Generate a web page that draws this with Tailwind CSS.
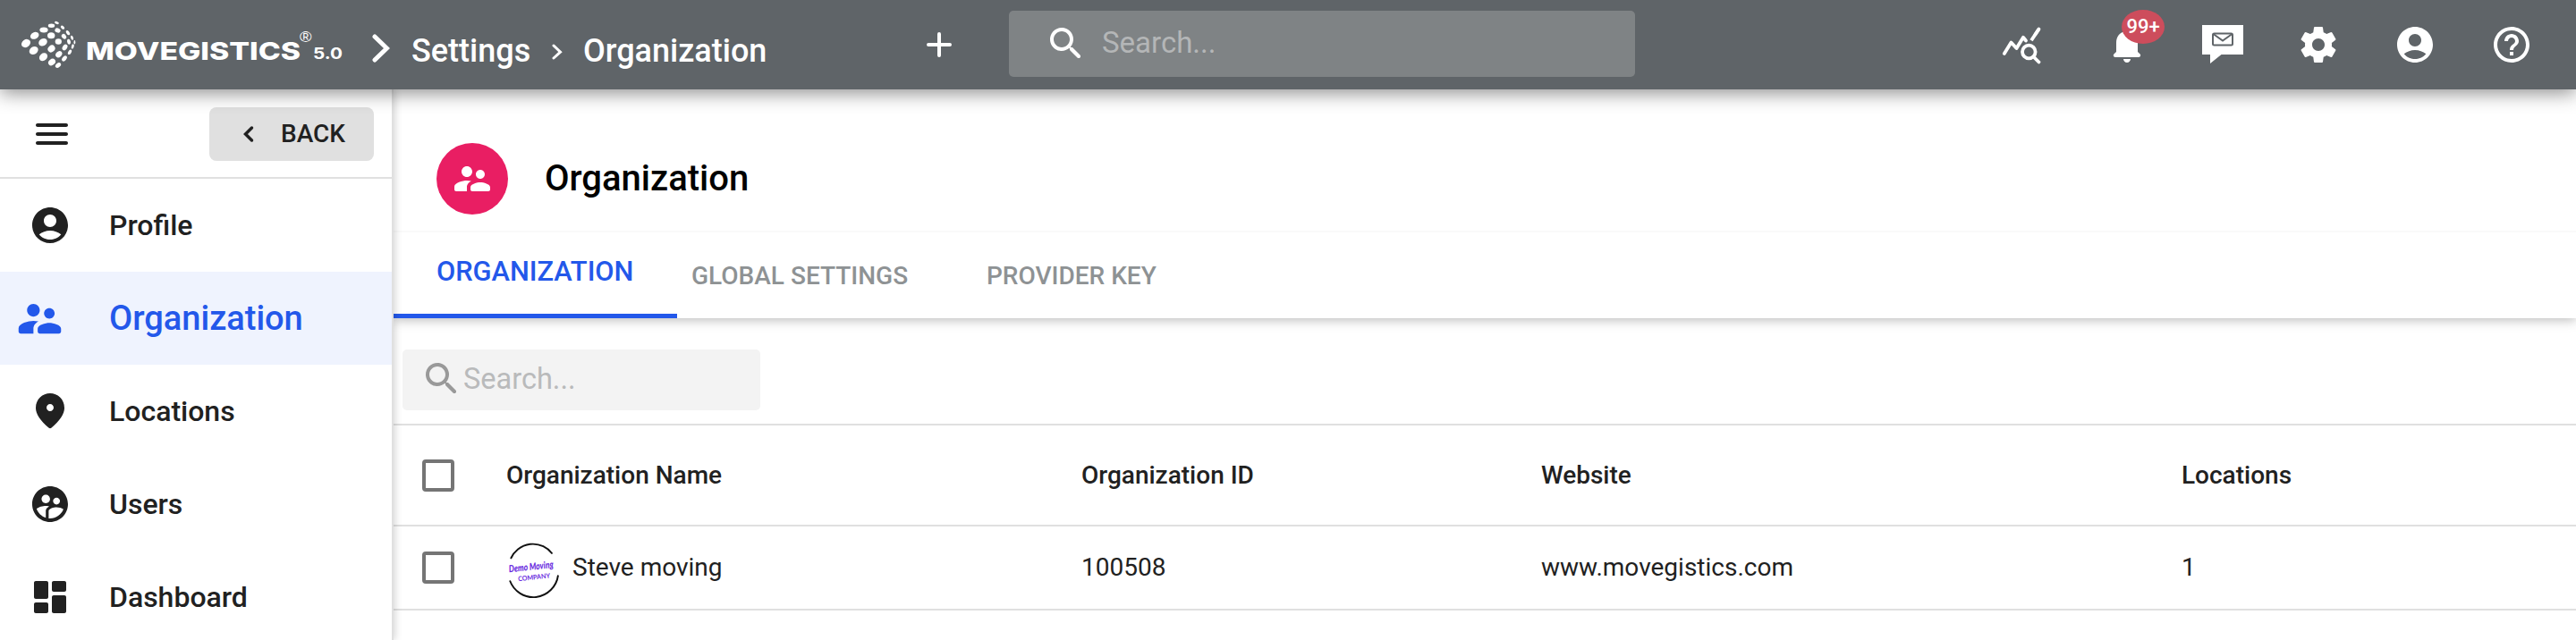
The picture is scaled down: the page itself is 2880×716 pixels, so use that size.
<!DOCTYPE html>
<html lang="en">
 <head>
  <meta charset="utf-8"/>
  <meta content="width=device-width, initial-scale=1" name="viewport"/>
  <title>Movegistics - Organization</title>
  <script src="https://cdn.jsdelivr.net/npm/@tailwindcss/browser@4"></script>
 </head>
 <body class="bg-white font-[Roboto,sans-serif] text-[#212121] h-[716px] overflow-hidden flex flex-col">
  <!-- Top bar -->
  <header class="relative z-20 h-[100px] shrink-0 bg-[#5f6468] text-white flex items-center shadow-[0_4px_20px_rgba(0,0,0,0.45)]">
   <svg class="ml-6 w-[60px] h-[52px] overflow-visible" viewBox="24 24 60 52" fill="currentColor">
    <ellipse cx="29" cy="48.500" rx="5.400" ry="4.200" transform="rotate(-35 29 48.500)"/>
    <ellipse cx="38.700" cy="39.800" rx="5" ry="3.700" transform="rotate(-25 38.700 39.800)"/>
    <ellipse cx="49" cy="33.500" rx="4.600" ry="3"/>
    <ellipse cx="57.500" cy="28.700" rx="3.700" ry="2.200"/>
    <ellipse cx="63.500" cy="25.500" rx="2.500" ry="1.400" transform="rotate(20 63.500 25.500)"/>
    <ellipse cx="37.700" cy="56.500" rx="5.300" ry="4.200" transform="rotate(-35 37.700 56.500)"/>
    <ellipse cx="48" cy="47.200" rx="5" ry="4" transform="rotate(-30 48 47.200)"/>
    <ellipse cx="57.200" cy="39.700" rx="4.200" ry="3.500"/>
    <ellipse cx="64.500" cy="34" rx="3.200" ry="2.500" transform="rotate(20 64.500 34)"/>
    <ellipse cx="70" cy="30.700" rx="2.500" ry="1.600" transform="rotate(40 70 30.700)"/>
    <ellipse cx="48.500" cy="63.700" rx="5" ry="4" transform="rotate(-40 48.500 63.700)"/>
    <ellipse cx="57.500" cy="54.500" rx="4.300" ry="3.600" transform="rotate(-40 57.500 54.500)"/>
    <ellipse cx="65.300" cy="46.500" rx="3.600" ry="3.300"/>
    <ellipse cx="71.500" cy="40.800" rx="3.100" ry="2.300" transform="rotate(50 71.500 40.800)"/>
    <ellipse cx="76" cy="36.700" rx="2.900" ry="1.700" transform="rotate(55 76 36.700)"/>
    <ellipse cx="58" cy="69.500" rx="4.300" ry="3.400" transform="rotate(-40 58 69.500)"/>
    <ellipse cx="65.800" cy="60.700" rx="4" ry="3.100" transform="rotate(-45 65.800 60.700)"/>
    <ellipse cx="72.500" cy="53" rx="3.600" ry="2.500" transform="rotate(-55 72.500 53)"/>
    <ellipse cx="77" cy="46.700" rx="3" ry="1.900" transform="rotate(80 77 46.700)"/>
    <ellipse cx="80.500" cy="42.200" rx="2.600" ry="1.400" transform="rotate(70 80.500 42.200)"/>
    <ellipse cx="65" cy="73" rx="3.500" ry="2.400" transform="rotate(-40 65 73)"/>
    <ellipse cx="72" cy="65.500" rx="3.500" ry="2.200" transform="rotate(-50 72 65.500)"/>
    <ellipse cx="78" cy="58.300" rx="3" ry="1.700" transform="rotate(-60 78 58.300)"/>
    <ellipse cx="81.300" cy="52" rx="2.700" ry="1.400" transform="rotate(-75 81.300 52)"/>
    <ellipse cx="83.400" cy="47.200" rx="2.200" ry="0.900" transform="rotate(90 83.400 47.200)"/>
   </svg>
   <svg class="ml-3 w-[292px] h-[100px]" viewBox="0 0 292 100" fill="currentColor">
    <text x="0" y="67" font-family="Inter, sans-serif" font-weight="800" font-size="27.500" textLength="240" lengthAdjust="spacingAndGlyphs">MOVEGISTICS</text>
    <text x="239" y="47" font-family="Liberation Sans, sans-serif" font-size="17" textLength="13.500" lengthAdjust="spacingAndGlyphs">®</text>
    <text x="254" y="66" font-family="Inter, sans-serif" font-weight="700" font-size="17.500" textLength="33" lengthAdjust="spacingAndGlyphs">5.0</text>
   </svg>
   <svg class="ml-7 mt-2 w-5 h-8" viewBox="0 0 20 32" fill="none" stroke="currentColor" stroke-width="5" stroke-linecap="round" stroke-linejoin="miter"><path d="M3 3l13.500 13L3 29"/></svg>
   <nav class="flex items-center pt-[13px] ml-6 text-[36px] font-medium w-[566px]">
    <span class="w-[157px]">Settings</span>
    <svg class="w-3 h-[18px] mt-[3px] mr-[23px]" viewBox="0 0 12 18" fill="none" stroke="currentColor" stroke-width="3" stroke-linecap="round"><path d="M2 2l7.500 7.200L2 16"/></svg>
    <span>Organization</span>
   </nav>
   <svg class="ml-2.5 w-7 h-7" viewBox="0 0 28 28" stroke="currentColor" stroke-width="4" stroke-linecap="round"><path d="M14 2v24M2 14h24"/></svg>
   <div class="ml-16 w-[700px] h-[74px] mb-0.5 rounded-[5px] bg-[#7f8385] flex items-center">
    <svg class="ml-10 w-12 h-12" viewBox="0 0 24 24" fill="currentColor"><path d="M15.500 14h-.79l-.28-.27c1.200-1.400 1.820-3.310 1.480-5.340-.47-2.780-2.790-5-5.590-5.340-4.230-.52-7.780 3.040-7.270 7.270.34 2.800 2.560 5.120 5.340 5.590 2.030.34 3.940-.28 5.340-1.480l.27.28v.79l4.250 4.250c.41.41 1.080.41 1.490 0 .41-.41.41-1.080 0-1.490L15.500 14zm-6 0C7.010 14 5 11.990 5 9.500S7.010 5 9.500 5 14 7.010 14 9.500 11.990 14 9.500 14z"/></svg>
    <span class="ml-4 mb-0.5 text-[33px] text-[#b4b6b7]">Search...</span>
   </div>
   <div class="ml-auto mr-12 flex items-center gap-[60px]">
    <svg class="w-12 h-12 mr-2.5" viewBox="0 0 48 48" fill="none" stroke="currentColor" stroke-width="3.800" stroke-linecap="round" stroke-linejoin="round"><path d="M4.800 34l7.700-12.500 6 6.500L26 15.800l3 3.700"/><path d="M43.500 6.500L35 19.300" stroke-linecap="butt"/><path d="M43.500 6.500l-4 6"/><circle cx="32.300" cy="32" r="7.300"/><path d="M38.500 38.500l5 5"/></svg>
    <div class="relative -mr-0.5">
     <svg class="w-12 h-12" viewBox="0 0 24 24" fill="currentColor"><path d="M12 22c1.100 0 2-.9 2-2h-4c0 1.100.89 2 2 2zm6-6v-5c0-3.070-1.640-5.640-4.500-6.320V4c0-.83-.67-1.500-1.500-1.500s-1.500.67-1.500 1.500v.68C7.630 5.360 6 7.920 6 11v5l-1.290 1.290c-.63.63-.19 1.710.7 1.710h13.170c.89 0 1.340-1.080.71-1.710L18 16z"/></svg>
     <span class="absolute left-[18px] -top-[15px] w-12 h-[38px] rounded-[50%] bg-[#cd4d5c] text-[22px] font-medium leading-[37px] text-center">99+</span>
    </div>
    <svg class="w-12 h-12" viewBox="0 0 48 48"><path fill="currentColor" d="M2 2h46v33H23.500L11 45V35H2z"/><g fill="none" stroke="#5f6468" stroke-width="2"><rect x="14" y="11.500" width="22" height="13" rx="1.500"/><path d="M14.500 12L25 19.500 35.500 12"/></g></svg>
    <svg class="w-12 h-12" viewBox="0 0 24 24" fill="currentColor"><path d="M19.430 12.980c.04-.32.070-.64.070-.98s-.03-.66-.07-.98l2.110-1.650c.19-.15.240-.42.120-.64l-2-3.460c-.12-.22-.39-.3-.61-.22l-2.490 1c-.52-.4-1.080-.73-1.690-.98l-.38-2.650C14.460 2.180 14.250 2 14 2h-4c-.25 0-.46.180-.49.420l-.38 2.650c-.61.25-1.170.59-1.690.98l-2.490-1c-.23-.09-.49 0-.61.220l-2 3.460c-.13.220-.07.490.12.640l2.110 1.650c-.04.320-.07.650-.07.980s.030.660.070.980l-2.110 1.650c-.19.150-.24.420-.12.640l2 3.460c.12.220.39.300.61.220l2.490-1c.52.400 1.080.730 1.690.980l.38 2.650c.030.240.240.420.490.420h4c.25 0 .46-.18.490-.42l.38-2.650c.61-.25 1.170-.59 1.690-.98l2.490 1c.23.090.49 0 .61-.22l2-3.460c.12-.22.070-.49-.12-.64l-2.110-1.650zM12 15.500c-1.930 0-3.500-1.570-3.500-3.500s1.570-3.500 3.500-3.500 3.500 1.570 3.500 3.500-1.570 3.500-3.500 3.500z"/></svg>
    <svg class="w-12 h-12" viewBox="0 0 24 24" fill="currentColor"><path d="M12 2C6.480 2 2 6.480 2 12s4.480 10 10 10 10-4.480 10-10S17.520 2 12 2zm0 4c1.930 0 3.500 1.570 3.500 3.500S13.930 13 12 13s-3.500-1.570-3.500-3.500S10.070 6 12 6zm0 14c-2.030 0-4.430-.82-6.140-2.880C7.550 15.800 9.680 15 12 15s4.450.8 6.140 2.120C16.430 19.180 14.030 20 12 20z"/></svg>
    <svg class="w-12 h-12" viewBox="0 0 24 24" fill="currentColor"><path d="M11 18h2v-2h-2v2zm1-16C6.480 2 2 6.480 2 12s4.480 10 10 10 10-4.480 10-10S17.520 2 12 2zm0 18c-4.410 0-8-3.590-8-8s3.590-8 8-8 8 3.590 8 8-3.590 8-8 8zm0-14c-2.210 0-4 1.790-4 4h2c0-1.100.9-2 2-2s2 .9 2 2c0 2-3 1.750-3 5h2c0-2.250 3-2.500 3-5 0-2.210-1.790-4-4-4z"/></svg>
   </div>
  </header>

  <div class="flex grow min-h-0">
   <!-- Side menu -->
   <aside class="relative z-10 w-[440px] shrink-0 bg-white border-r-2 border-[#e0e0e0] shadow-[2px_0_8px_rgba(0,0,0,0.16)] text-[32px] font-medium">
    <div class="h-[100px] border-b-2 border-[#e0e0e0] flex items-center justify-between pl-[34px] pr-5">
     <svg class="w-12 h-12 mt-0.5" viewBox="0 0 24 24" fill="currentColor"><path d="M4 18h16c.55 0 1-.45 1-1s-.45-1-1-1H4c-.55 0-1 .45-1 1s.45 1 1 1zm0-5h16c.55 0 1-.45 1-1s-.45-1-1-1H4c-.55 0-1 .45-1 1s.45 1 1 1zM3 7c0 .55.45 1 1 1h16c.55 0 1-.45 1-1s-.45-1-1-1H4c-.55 0-1 .45-1 1z"/></svg>
     <button class="mt-0.5 w-[184px] h-[60px] rounded-lg bg-[#e0e0e0] flex items-center text-[28px] pl-[38px]">
      <svg class="w-3 h-5 mr-[30px]" viewBox="0 0 12 20" fill="none" stroke="currentColor" stroke-width="3.500" stroke-linecap="round"><path d="M9.500 3L2.500 10l7 7"/></svg>
      BACK
     </button>
    </div>
    <a class="h-[104px] flex items-center pl-8">
     <svg class="w-12 h-12 mr-[42px]" viewBox="0 0 24 24" fill="currentColor"><path d="M12 2C6.480 2 2 6.480 2 12s4.480 10 10 10 10-4.480 10-10S17.520 2 12 2zm0 4c1.930 0 3.500 1.570 3.500 3.500S13.930 13 12 13s-3.500-1.570-3.500-3.500S10.070 6 12 6zm0 14c-2.030 0-4.430-.82-6.140-2.880C7.550 15.800 9.680 15 12 15s4.450.8 6.140 2.120C16.430 19.180 14.030 20 12 20z"/></svg>
     Profile
    </a>
    <a class="h-[104px] flex items-center pl-4 bg-[#eff3fe] text-[#2358ea] text-[38px]">
     <svg class="w-[57px] h-[57px] mr-[49px]" viewBox="0 0 24 24" fill="currentColor"><path d="M16.500 12c1.380 0 2.490-1.120 2.490-2.500S17.880 7 16.500 7 14 8.120 14 9.500s1.120 2.500 2.500 2.500zM9 11c1.660 0 2.990-1.340 2.990-3S10.660 5 9 5 6 6.340 6 8s1.340 3 3 3zm7.500 3c-1.830 0-5.500.92-5.500 2.750V18c0 .55.45 1 1 1h9c.55 0 1-.45 1-1v-1.250c0-1.830-3.670-2.750-5.500-2.750zM9 13c-2.330 0-7 1.170-7 3.500V18c0 .55.45 1 1 1h6v-2.250c0-.85.33-2.340 2.370-3.470C10.500 13.100 9.660 13 9 13z"/></svg>
     <span class="pt-px">Organization</span>
    </a>
    <a class="h-[104px] flex items-center pl-8">
     <svg class="w-12 h-12 mr-[42px]" viewBox="0 0 24 24" fill="currentColor"><path d="M12 2C7.800 2 4 5.220 4 10.200c0 3.180 2.450 6.920 7.340 11.220.38.330.95.330 1.330 0C17.550 17.120 20 13.380 20 10.200 20 5.220 16.200 2 12 2zm0 10c-1.100 0-2-.9-2-2s.9-2 2-2 2 .9 2 2-.9 2-2 2z"/></svg>
     Locations
    </a>
    <a class="h-[104px] flex items-center pl-8">
     <svg class="w-12 h-12 mr-[42px]" viewBox="0 0 24 24" fill="currentColor"><path d="M11.990 2c-5.520 0-10 4.480-10 10s4.480 10 10 10 10-4.480 10-10-4.480-10-10-10zm3.610 6.340c1.070 0 1.930.86 1.930 1.930s-.86 1.930-1.930 1.930-1.930-.86-1.930-1.930c-.01-1.070.86-1.930 1.930-1.930zm-6-1.580c1.300 0 2.360 1.060 2.360 2.360s-1.060 2.360-2.360 2.360-2.360-1.060-2.360-2.360c0-1.310 1.050-2.360 2.360-2.360zm0 9.130v3.750c-2.400-.75-4.300-2.600-5.140-4.960 1.050-1.120 3.670-1.690 5.140-1.690.53 0 1.200.08 1.900.22-1.640.87-1.900 2.020-1.900 2.680zM11.990 20c-.27 0-.53-.01-.79-.04v-4.070c0-1.420 2.940-2.130 4.400-2.130 1.070 0 2.920.39 3.840 1.150-1.170 2.970-4.060 5.090-7.450 5.090z"/></svg>
     Users
    </a>
    <a class="h-[104px] flex items-center pl-8">
     <svg class="w-12 h-12 mr-[42px]" viewBox="0 0 24 24" fill="currentColor"><path d="M4 13h6c.55 0 1-.45 1-1V4c0-.55-.45-1-1-1H4c-.55 0-1 .45-1 1v8c0 .55.45 1 1 1zm0 8h6c.55 0 1-.45 1-1v-4c0-.55-.45-1-1-1H4c-.55 0-1 .45-1 1v4c0 .55.45 1 1 1zm10 0h6c.55 0 1-.45 1-1v-8c0-.55-.45-1-1-1h-6c-.55 0-1 .45-1 1v8c0 .55.45 1 1 1zM13 4v4c0 .55.45 1 1 1h6c.55 0 1-.45 1-1V4c0-.55-.45-1-1-1h-6c-.55 0-1 .45-1 1z"/></svg>
     Dashboard
    </a>
   </aside>

   <main class="grow min-w-0">
    <section class="relative h-[256px] shadow-[0_2px_12px_rgba(0,0,0,0.28)]">
     <div class="h-[160px] border-b-2 border-[#fafafa] pt-[60px] pl-12 flex items-start">
      <span class="size-20 rounded-full bg-[#e91e63] text-white flex items-center justify-center">
       <svg class="w-12 h-12" viewBox="0 0 24 24" fill="currentColor"><path d="M16.500 12c1.380 0 2.490-1.120 2.490-2.500S17.880 7 16.500 7 14 8.120 14 9.500s1.120 2.500 2.500 2.500zM9 11c1.660 0 2.990-1.340 2.990-3S10.660 5 9 5 6 6.340 6 8s1.340 3 3 3zm7.500 3c-1.830 0-5.500.92-5.500 2.750V18c0 .55.45 1 1 1h9c.55 0 1-.45 1-1v-1.250c0-1.830-3.670-2.750-5.500-2.750zM9 13c-2.330 0-7 1.170-7 3.500V18c0 .55.45 1 1 1h6v-2.250c0-.85.33-2.340 2.370-3.470C10.500 13.100 9.660 13 9 13z"/></svg>
      </span>
      <h1 class="ml-[41px] text-[40px] leading-[80px] font-medium text-black">Organization</h1>
     </div>
     <div class="h-24 flex text-[28px] font-medium text-[#8e9294]">
      <a class="w-[317px] pl-12 border-b-[5px] border-[#2358ea] text-[#2358ea] text-[30.8px] leading-[88px]">ORGANIZATION</a>
      <a class="w-[330px] pl-4 leading-[98px]">GLOBAL SETTINGS</a>
      <a class="pl-4 leading-[98px]">PROVIDER KEY</a>
     </div>
    </section>

    <div class="h-[118px] pt-[35px] pl-2.5">
     <div class="w-[400px] h-[68px] rounded-[5px] bg-[#f3f3f3] flex items-center">
      <svg class="ml-5 -mt-0.5 w-12 h-12 text-[#999]" viewBox="0 0 24 24" fill="currentColor"><path d="M15.500 14h-.79l-.28-.27c1.200-1.400 1.820-3.310 1.480-5.340-.47-2.780-2.790-5-5.590-5.340-4.230-.52-7.780 3.040-7.270 7.270.34 2.800 2.560 5.120 5.340 5.590 2.030.34 3.940-.28 5.340-1.480l.27.28v.79l4.250 4.250c.41.41 1.080.41 1.490 0 .41-.41.41-1.080 0-1.490L15.500 14zm-6 0C7.010 14 5 11.990 5 9.500S7.010 5 9.500 5 14 7.010 14 9.500 11.990 14 9.500 14z"/></svg>
      <span class="mb-0.5 text-[32.5px] text-[#b9babb]">Search...</span>
     </div>
    </div>

    <!-- Organizations table -->
    <div class="text-[28px]">
     <div class="h-[113px] border-t-2 border-[#e0e0e0] grid grid-cols-[126px_643px_514px_716px_1fr] items-center font-medium">
      <span class="ml-8 size-9 rounded-[4px] border-4 border-[#757575]"></span>
      <span>Organization Name</span>
      <span>Organization ID</span>
      <span>Website</span>
      <span>Locations</span>
     </div>
     <div class="h-24 border-y-2 border-[#e0e0e0] grid grid-cols-[126px_643px_514px_716px_1fr] items-center">
      <span class="ml-8 size-9 rounded-[4px] border-4 border-[#757575]"></span>
      <span class="flex items-center">
       <svg class="w-[60px] h-[60px] mr-3.5 mt-0.5 overflow-visible" viewBox="0 0 60 60" fill="none">
        <path d="M5 19A27.500 28.500 0 0 1 51.500 13.500M4 43.500A28 28.500 0 0 0 58 37.500" stroke="#111" stroke-width="1.900"/>
        <g transform="rotate(-6 30 30)" fill="#6a2be0">
         <text x="3" y="31.500" font-family="Lato, sans-serif" font-style="italic" font-weight="900" font-size="11" textLength="50" lengthAdjust="spacingAndGlyphs">Demo Moving</text>
         <text x="12" y="42.500" font-family="Lato, sans-serif" font-weight="700" font-size="7.500" textLength="36" lengthAdjust="spacingAndGlyphs">COMPANY</text>
        </g>
       </svg>
       Steve moving
      </span>
      <span>100508</span>
      <span>www.movegistics.com</span>
      <span>1</span>
     </div>
    </div>
   </main>
  </div>
 </body>
</html>
